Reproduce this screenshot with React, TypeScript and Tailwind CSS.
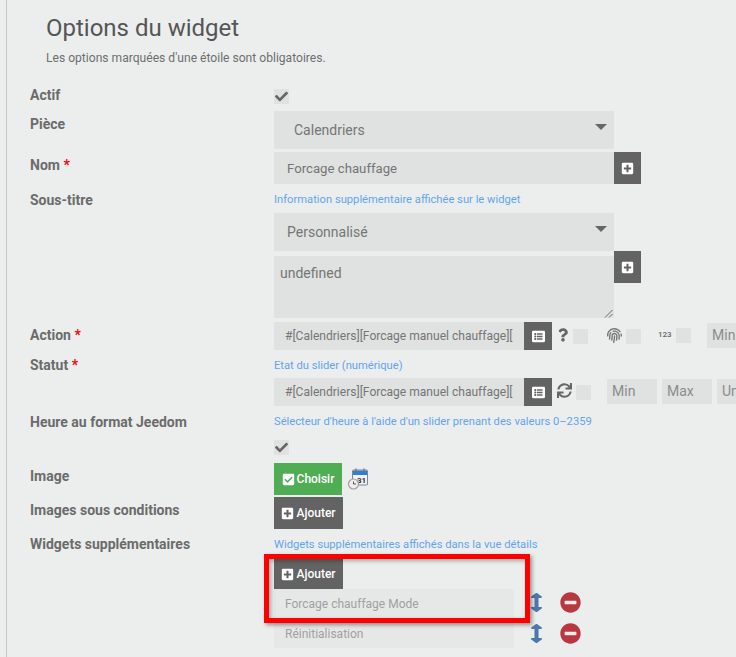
import type { ReactNode } from "react";
import {
  FaArrowsAltV,
  FaCheck,
  FaCheckSquare,
  FaFingerprint,
  FaListAlt,
  FaMinusCircle,
  FaPlusSquare,
  FaQuestion,
  FaSync,
} from "react-icons/fa";

function Check({ checked = false, className = "" }: { checked?: boolean; className?: string }) {
  return (
    <span className={`flex h-[15px] w-[15px] shrink-0 items-center justify-center bg-[#e0e2e1] text-[#666] ${className}`}>
      {checked && <FaCheck className="text-[13px]" />}
    </span>
  );
}

function Help({ children, className = "" }: { children: ReactNode; className?: string }) {
  return <p className={`text-[11.2px] leading-[14px] text-[#62a4ec] ${className}`}>{children}</p>;
}

function Label({ children, required = false, className = "" }: { children: ReactNode; required?: boolean; className?: string }) {
  return (
    <div className={`w-[244px] shrink-0 text-[14px] font-bold leading-[16px] text-[#6b6b6b] ${className}`}>
      {children}
      {required && <span className="text-[#ff0000]"> *</span>}
    </div>
  );
}

function Select({ value, pad }: { value: string; pad: string }) {
  return (
    <div className={`relative flex h-[38px] w-[340px] items-center bg-[#e0e2e1] text-[14px] text-[#757575] ${pad}`}>
      {value}
      <span className="absolute right-[7px] top-[13px] h-0 w-0 border-x-[6px] border-t-[6px] border-x-transparent border-t-[#666]" />
    </div>
  );
}

function SquareBtn({ wide = false, children }: { wide?: boolean; children: ReactNode }) {
  return (
    <span className={`flex shrink-0 items-center justify-center bg-[#636363] text-[13px] text-white ${wide ? "h-[28px] w-[28px]" : "h-[32px] w-[27px]"}`}>
      {children}
    </span>
  );
}

function CmdInput() {
  return (
    <div className="flex h-[28px] w-[250px] shrink-0 items-center overflow-hidden whitespace-nowrap bg-[#e0e2e1] pl-[11px] pt-[1px] text-[12.05px] text-[#757575]">
      #[Calendriers][Forcage manuel chauffage][
    </div>
  );
}

function SmallInput({ text, className = "" }: { text: string; className?: string }) {
  return (
    <div className={`flex h-[25px] w-[50px] shrink-0 items-center bg-[#e0e2e1] pl-[5px] text-[14px] text-[#8c8c8c] ${className}`}>
      {text}
    </div>
  );
}

function AddButton({ className = "" }: { className?: string }) {
  return (
    <span className={`flex w-[69px] items-center justify-center gap-[2px] bg-[#636363] text-[12px] font-medium text-white ${className}`}>
      <FaPlusSquare className="text-[13px]" />
      Ajouter
    </span>
  );
}

function WidgetRow({ text, className = "", iconClass = "" }: { text: string; className?: string; iconClass?: string }) {
  return (
    <div className={`flex items-center ${className}`}>
      <div className="flex h-full w-[240px] items-center bg-[#e6e8e7] pl-[11px] text-[12px] text-[#a0a0a0]">{text}</div>
      <FaArrowsAltV preserveAspectRatio="none" className={`ml-[16px] h-[19px] w-[13px] text-[#4c78ab] ${iconClass}`} />
      <FaMinusCircle className={`ml-[17px] text-[21px] text-[#b9383f] ${iconClass}`} />
    </div>
  );
}

function CalendarIcon() {
  return (
    <svg width="22" height="22" viewBox="0 0 22 22" className="ml-[5px] mt-[5px] shrink-0">
      <rect x="5.5" y="2" width="15" height="15" rx="1" fill="#f2f2f2" stroke="#7d8791" />
      <rect x="6" y="2.5" width="14" height="4.5" fill="#2f7fd0" />
      <path d="M9 .5v3M17 .5v3" stroke="#6b7680" strokeWidth="1.2" />
      <text x="10" y="15" fontSize="8" fontWeight="700" fill="#333" fontFamily="Roboto, sans-serif">31</text>
      <circle cx="6.5" cy="16" r="5" fill="#eeeeee" stroke="#a0a0a0" strokeWidth="1.2" />
      <path d="M6.5 13.5V16H9" fill="none" stroke="#555" strokeWidth="1" />
    </svg>
  );
}

export default function App() {
  return (
    <div className="h-[657px] w-[736px] overflow-hidden bg-[#eceeee] pl-[6px] font-['Roboto',sans-serif]">
      <div className="relative h-full border-l border-[#c4c6c6] pl-[23px]">
        {/* Heading */}
        <h1 className="ml-[16px] pt-[14px] text-[24px] leading-[28px] text-[#555]">Options du widget</h1>
        <p className="ml-[16px] mt-[9px] text-[12.1px] leading-[14px] text-[#6e6e6e]">Les options marquées d'une étoile sont obligatoires.</p>

        {/* Actif */}
        <div className="mt-[24px] flex h-[15px]">
          <Label className="-mt-[2px]">Actif</Label>
          <Check checked />
        </div>

        {/* Pièce */}
        <div className="mt-[7px] flex">
          <Label className="pt-[5px]">Pièce</Label>
          <Select value="Calendriers" pad="pl-[20px]" />
        </div>

        {/* Nom */}
        <div className="mt-[3px] flex">
          <Label required className="pt-[5px]">Nom</Label>
          <div className="flex h-[32px] w-[340px] items-center bg-[#e0e2e1] pl-[13px] pt-[1px] text-[13.2px] text-[#757575]">Forcage chauffage</div>
          <SquareBtn><FaPlusSquare /></SquareBtn>
        </div>

        {/* Sous-titre */}
        <div className="mt-[8px] flex">
          <Label>Sous-titre</Label>
          <Help className="pt-[1px]">Information supplémentaire affichée sur le widget</Help>
        </div>
        <div className="ml-[244px] mt-[5px]">
          <Select value="Personnalisé" pad="pl-[13px]" />
          <div className="flex">
            <div className="relative mt-[5px] h-[62px] w-[340px] bg-[#e0e2e1] pl-[6px] pt-[9px] text-[14px] leading-[16px] text-[#757575]">
              undefined
              <svg width="9" height="9" viewBox="0 0 9 9" className="absolute bottom-0 right-[1px]" fill="none" stroke="#666">
                <path d="M1 8.5 8.5 1M5 8.5 8.5 5" />
              </svg>
            </div>
            <SquareBtn><FaPlusSquare /></SquareBtn>
          </div>
        </div>

        {/* Action */}
        <div className="mt-[4px] flex">
          <Label required className="pt-[5px]">Action</Label>
          <CmdInput />
          <SquareBtn wide><FaListAlt /></SquareBtn>
          <FaQuestion className="ml-[6px] mt-[6px] w-[10px] shrink-0 text-[14px] text-[#666]" />
          <Check className="ml-[5px] mt-[7px]" />
          <FaFingerprint className="ml-[19px] mt-[6px] shrink-0 text-[15px] text-[#777]" />
          <Check className="ml-[4px] mt-[7px]" />
          <span className="ml-[17px] mt-[8px] w-[14px] shrink-0 text-[8px] font-medium leading-[10px] text-[#666]">123</span>
          <Check className="ml-[4px] mt-[6px]" />
          <SmallInput text="Min" className="ml-[16px] mt-[1px]" />
        </div>

        {/* Statut */}
        <div className="mt-[8px] flex">
          <Label required className="-mt-[1px]">Statut</Label>
          <Help className="pt-[1px]">Etat du slider (numérique)</Help>
        </div>
        <div className="ml-[244px] mt-[5px] flex">
          <CmdInput />
          <SquareBtn wide><FaListAlt /></SquareBtn>
          <FaSync className="ml-[5px] mt-[5px] shrink-0 text-[15px] text-[#666]" />
          <Check className="ml-[4px] mt-[7px]" />
          <SmallInput text="Min" className="ml-[16px] mt-[1px]" />
          <SmallInput text="Max" className="ml-[5px] mt-[1px]" />
          <SmallInput text="Unité" className="ml-[5px] mt-[1px]" />
        </div>

        {/* Heure au format Jeedom */}
        <div className="mt-[8px] flex">
          <Label>Heure au format Jeedom</Label>
          <Help className="pt-[1px]">Sélecteur d'heure à l'aide d'un slider prenant des valeurs 0–2359</Help>
        </div>
        <div className="ml-[244px] mt-[10px]">
          <Check checked />
        </div>

        {/* Image */}
        <div className="mt-[8px] flex">
          <Label className="pt-[5px]">Image</Label>
          <span className="flex h-[32px] w-[68px] items-center justify-center gap-[2px] bg-[#4fae53] text-[12px] font-medium text-white">
            <FaCheckSquare className="text-[13px]" />
            Choisir
          </span>
          <CalendarIcon />
        </div>

        {/* Images sous conditions */}
        <div className="mt-[2px] flex">
          <Label className="pt-[5px]">Images sous conditions</Label>
          <AddButton className="h-[32px]" />
        </div>

        {/* Widgets supplémentaires */}
        <div className="mt-[8px] flex">
          <Label className="-mt-[1px]">Widgets supplémentaires</Label>
          <Help className="pt-[1px]">Widgets supplémentaires affichés dans la vue détails</Help>
        </div>
        <div className="ml-[244px] mt-[7px]">
          <AddButton className="h-[30px]" />
          <WidgetRow text="Forcage chauffage Mode" className="h-[30px]" iconClass="-mt-[3px]" />
          <WidgetRow text="Réinitialisation" className="mt-[1px] h-[28px]" iconClass="-mt-[2px]" />
        </div>

        {/* Annotation */}
        <div className="absolute left-[257px] top-[554px] h-[69px] w-[266px] border-[5px] border-[#ff0000] shadow-[2px_2px_4px_rgba(0,0,0,0.4),inset_2px_2px_4px_rgba(0,0,0,0.3)]" />
      </div>
    </div>
  );
}
